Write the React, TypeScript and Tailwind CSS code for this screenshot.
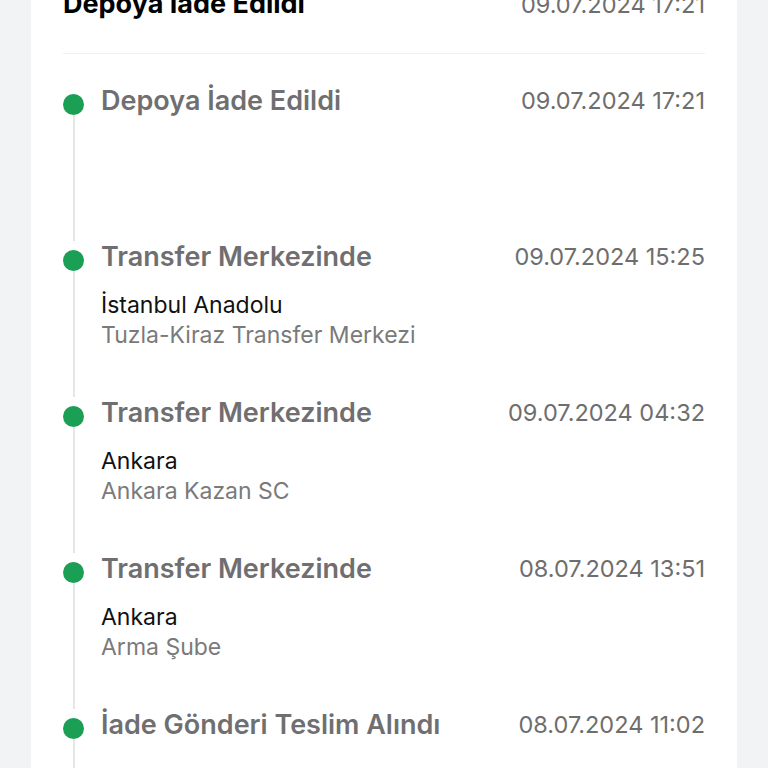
import React from 'react';

const events = [
  { title: "Depoya İade Edildi", date: "09.07.2024 17:21", city: "", branch: "" },
  { title: "Transfer Merkezinde", date: "09.07.2024 15:25", city: "İstanbul Anadolu", branch: "Tuzla-Kiraz Transfer Merkezi" },
  { title: "Transfer Merkezinde", date: "09.07.2024 04:32", city: "Ankara", branch: "Ankara Kazan SC" },
  { title: "Transfer Merkezinde", date: "08.07.2024 13:51", city: "Ankara", branch: "Arma Şube" },
  { title: "İade Gönderi Teslim Alındı", date: "08.07.2024 11:02", city: "", branch: "" },
];

const App = () => {
  return (
    <div className="h-[768px] overflow-hidden bg-[#f2f3f5] px-[31px] font-['Inter','Noto_Sans',sans-serif]">
      <div className="-mt-[44px] bg-white px-8 pt-8">
        {/* Header */}
        <div className="flex items-baseline justify-between border-b border-[#f0f0f0] pb-8">
          <h1 className="text-[27px] leading-8 font-bold text-black">Depoya İade Edildi</h1>
          <span className="text-[23.5px] leading-8 text-[#6e6e6e]">09.07.2024 17:21</span>
        </div>

        {/* Timeline */}
        <div className="pt-[31px]">
          {events.map((e, i) => (
            <div key={i} className="flex min-h-[156px] gap-[17px]">
              <div className="flex w-[21px] flex-col items-center">
                <div className="mt-[9px] h-[21px] w-[21px] shrink-0 rounded-full bg-[#1a9f55]" />
                <div className="w-[2px] flex-1 bg-[#e6e6e6]" />
              </div>
              <div className="flex-1 pb-10">
                <div className="flex items-center justify-between">
                  <div className="text-[27px] leading-8 font-semibold text-[#6f6f72]">{e.title}</div>
                  <div className="text-[23.5px] leading-8 text-[#6e6e6e]">{e.date}</div>
                </div>
                {e.city && (
                  <div className="mt-[17px] text-[23px] leading-[30px]">
                    <div className="text-[#111111]">{e.city}</div>
                    <div className="text-[#7a7a7a]">{e.branch}</div>
                  </div>
                )}
              </div>
            </div>
          ))}
        </div>
      </div>
    </div>
  );
};

export default App;
